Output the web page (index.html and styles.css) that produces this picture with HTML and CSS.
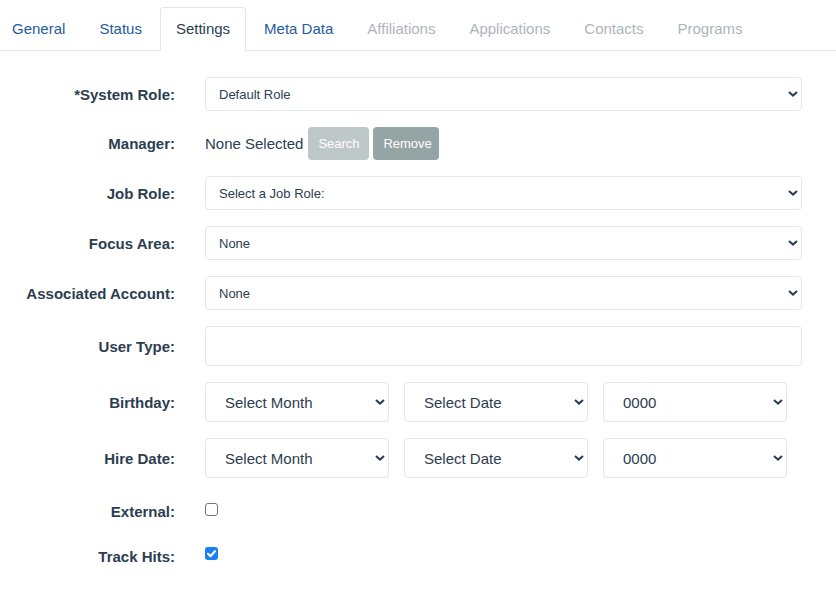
FILE: index.html
```html
<!DOCTYPE html>
<html lang="en">
<head>
<meta charset="utf-8">
<title>User Settings</title>
<link rel="stylesheet" href="styles.css">
</head>
<body>
<nav class="tabs">
  <ul class="tab-list">
    <li class="tab">General</li>
    <li class="tab">Status</li>
    <li class="tab active">Settings</li>
    <li class="tab">Meta Data</li>
    <li class="tab disabled">Affiliations</li>
    <li class="tab disabled">Applications</li>
    <li class="tab disabled">Contacts</li>
    <li class="tab disabled">Programs</li>
  </ul>
</nav>

<form class="settings">
  <div class="row">
    <label class="label">*System Role:</label>
    <div class="select sm"><span>Default Role</span><svg class="chev" viewBox="0 0 10 6" width="10" height="6"><path d="M1 1l4 3.6L9 1" fill="none" stroke="#2c3e50" stroke-width="2"/></svg></div>
  </div>

  <div class="row">
    <label class="label">Manager:</label>
    <div class="manager">
      <span class="none">None Selected</span>
      <button type="button" class="btn btn-search">Search</button>
      <button type="button" class="btn btn-remove">Remove</button>
    </div>
  </div>

  <div class="row">
    <label class="label">Job Role:</label>
    <div class="select sm"><span>Select a Job Role:</span><svg class="chev" viewBox="0 0 10 6" width="10" height="6"><path d="M1 1l4 3.6L9 1" fill="none" stroke="#2c3e50" stroke-width="2"/></svg></div>
  </div>

  <div class="row">
    <label class="label">Focus Area:</label>
    <div class="select sm"><span>None</span><svg class="chev" viewBox="0 0 10 6" width="10" height="6"><path d="M1 1l4 3.6L9 1" fill="none" stroke="#2c3e50" stroke-width="2"/></svg></div>
  </div>

  <div class="row">
    <label class="label">Associated Account:</label>
    <div class="select sm"><span>None</span><svg class="chev" viewBox="0 0 10 6" width="10" height="6"><path d="M1 1l4 3.6L9 1" fill="none" stroke="#2c3e50" stroke-width="2"/></svg></div>
  </div>

  <div class="row">
    <label class="label">User Type:</label>
    <div class="text-input"></div>
  </div>

  <div class="row">
    <label class="label">Birthday:</label>
    <div class="date-group">
      <div class="select lg"><span>Select Month</span><svg class="chev" viewBox="0 0 10 6" width="10" height="6"><path d="M1 1l4 3.6L9 1" fill="none" stroke="#2c3e50" stroke-width="2"/></svg></div>
      <div class="select lg"><span>Select Date</span><svg class="chev" viewBox="0 0 10 6" width="10" height="6"><path d="M1 1l4 3.6L9 1" fill="none" stroke="#2c3e50" stroke-width="2"/></svg></div>
      <div class="select lg"><span>0000</span><svg class="chev" viewBox="0 0 10 6" width="10" height="6"><path d="M1 1l4 3.6L9 1" fill="none" stroke="#2c3e50" stroke-width="2"/></svg></div>
    </div>
  </div>

  <div class="row">
    <label class="label">Hire Date:</label>
    <div class="date-group">
      <div class="select lg"><span>Select Month</span><svg class="chev" viewBox="0 0 10 6" width="10" height="6"><path d="M1 1l4 3.6L9 1" fill="none" stroke="#2c3e50" stroke-width="2"/></svg></div>
      <div class="select lg"><span>Select Date</span><svg class="chev" viewBox="0 0 10 6" width="10" height="6"><path d="M1 1l4 3.6L9 1" fill="none" stroke="#2c3e50" stroke-width="2"/></svg></div>
      <div class="select lg"><span>0000</span><svg class="chev" viewBox="0 0 10 6" width="10" height="6"><path d="M1 1l4 3.6L9 1" fill="none" stroke="#2c3e50" stroke-width="2"/></svg></div>
    </div>
  </div>

  <div class="row check-row">
    <label class="label">External:</label>
    <span class="checkbox"></span>
  </div>

  <div class="row check-row">
    <label class="label">Track Hits:</label>
    <span class="checkbox checked"><svg viewBox="0 0 13 13" width="13" height="13"><path d="M3 6.8l2.4 2.4L10 4.2" fill="none" stroke="#fff" stroke-width="2.2" stroke-linecap="round" stroke-linejoin="round"/></svg></span>
  </div>
</form>
</body>
</html>
```

FILE: styles.css
```css
* { box-sizing: border-box; }

body {
  margin: 0;
  background: #fff;
  font-family: "Liberation Sans", Arial, Helvetica, sans-serif;
  color: #2c3e50;
}

.tabs {
  padding-top: 7px;
  border-bottom: 1px solid #e3e6e9;
  height: 51px;
}

.tab-list {
  list-style: none;
  margin: 0 0 0 -4px;
  padding: 0;
  display: flex;
}

.tab {
  height: 44px;
  line-height: 41px;
  padding: 0 15px;
  margin-right: 2px;
  border: 1px solid transparent;
  border-radius: 4px 4px 0 0;
  font-size: 15px;
  color: #1f5c9e;
}

.tab.active {
  color: #2c3e50;
  background: #fff;
  border-color: #e3e6e9 #e3e6e9 #fff;
}

.tab.disabled {
  color: #aeb4bb;
}

.settings {
  padding: 26px 34px 0 0;
  display: flex;
  flex-direction: column;
  gap: 16px;
}

.row {
  display: grid;
  grid-template-columns: 175px 1fr;
  column-gap: 30px;
  align-items: center;
}

.label {
  text-align: right;
  font-size: 15px;
  font-weight: bold;
  color: #2c3e50;
}

.select {
  display: flex;
  align-items: center;
  justify-content: space-between;
  border: 1px solid #e3e6ea;
  border-radius: 4px;
  background: #fff;
  color: #2c3e50;
}

.select.sm {
  height: 34px;
  padding: 0 3px 0 13px;
  font-size: 13px;
}

.select.lg {
  height: 40px;
  width: 184px;
  padding: 0 3px 0 19px;
  font-size: 15px;
}

.chev { display: block; }

.text-input {
  height: 40px;
  border: 1px solid #e3e6ea;
  border-radius: 4px;
  background: #fff;
}

.date-group {
  display: flex;
  gap: 15px;
}

.manager {
  display: flex;
  align-items: center;
  height: 33px;
}

.none {
  font-size: 15px;
  color: #2c3e50;
  margin-right: 5px;
}

.btn {
  height: 33px;
  border: 0;
  border-radius: 4px;
  padding: 0 10px;
  font-family: inherit;
  font-size: 13px;
  color: #fff;
}

.btn-search {
  background: #bfc8c9;
  width: 61px;
  margin-right: 4px;
}

.btn-remove {
  background: #95a5a6;
  width: 66px;
}

.check-row {
  align-items: start;
  padding-top: 7px;
}

.check-row .label {
  line-height: 22px;
}

.checkbox {
  display: block;
  width: 13px;
  height: 13px;
  margin-top: 2px;
  border: 1px solid #767676;
  border-radius: 3px;
  background: #fff;
}

.checkbox.checked {
  border: 0;
  background: #1a7ff5;
  margin-top: 1px;
}

.checkbox svg { display: block; }
```
